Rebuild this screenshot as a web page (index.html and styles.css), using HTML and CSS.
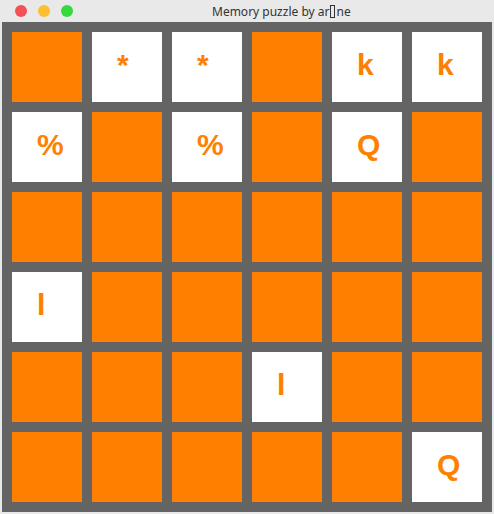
FILE: index.html
```html
<!DOCTYPE html>
<html>
<head>
<meta charset="utf-8">
<link rel="stylesheet" href="styles.css">
</head>
<body>
<div class="titlebar">
  <div class="lights">
    <span class="light red"></span>
    <span class="light yellow"></span>
    <span class="light green"></span>
  </div>
  <div class="title">Memory puzzle by ar<span class="tofu"></span>ne</div>
</div>
<div class="board">
  <div class="tile"></div>
  <div class="tile open">*</div>
  <div class="tile open">*</div>
  <div class="tile"></div>
  <div class="tile open">k</div>
  <div class="tile open">k</div>

  <div class="tile open">%</div>
  <div class="tile"></div>
  <div class="tile open">%</div>
  <div class="tile"></div>
  <div class="tile open">Q</div>
  <div class="tile"></div>

  <div class="tile"></div>
  <div class="tile"></div>
  <div class="tile"></div>
  <div class="tile"></div>
  <div class="tile"></div>
  <div class="tile"></div>

  <div class="tile open">l</div>
  <div class="tile"></div>
  <div class="tile"></div>
  <div class="tile"></div>
  <div class="tile"></div>
  <div class="tile"></div>

  <div class="tile"></div>
  <div class="tile"></div>
  <div class="tile"></div>
  <div class="tile open">l</div>
  <div class="tile"></div>
  <div class="tile"></div>

  <div class="tile"></div>
  <div class="tile"></div>
  <div class="tile"></div>
  <div class="tile"></div>
  <div class="tile"></div>
  <div class="tile open">Q</div>
</div>
</body>
</html>
```
FILE: styles.css
```css
html, body {
  margin: 0;
  padding: 0;
  background: #e9e9e9;
}
.titlebar {
  height: 22px;
  display: flex;
  align-items: center;
  background: #e9e9e9;
}
.lights {
  display: flex;
  gap: 11px;
  padding-left: 15px;
}
.light {
  width: 12px;
  height: 12px;
  border-radius: 50%;
  display: block;
}
.red { background: #f45157; }
.yellow { background: #fcbf30; }
.green { background: #35d93e; }
.title {
  margin-left: 139px;
  font-family: "Noto Sans", sans-serif;
  font-size: 12px;
  color: #333;
  white-space: nowrap;
}
.tofu {
  display: inline-block;
  width: 3px;
  height: 11px;
  border: 1px solid #333;
  vertical-align: -2px;
  margin: 0 1px;
}
.board {
  margin: 0 2px;
  padding: 10px;
  background: #646464;
  display: grid;
  grid-template-columns: repeat(6, 70px);
  grid-auto-rows: 70px;
  gap: 10px;
}
.tile {
  background: #ff8000;
  box-sizing: border-box;
  padding: 18px 0 0 25px;
  font-family: "Liberation Sans", Arial, sans-serif;
  font-weight: bold;
  font-size: 30px;
  line-height: 30px;
  color: #ff8000;
}
.tile.open {
  background: #ffffff;
}
```
